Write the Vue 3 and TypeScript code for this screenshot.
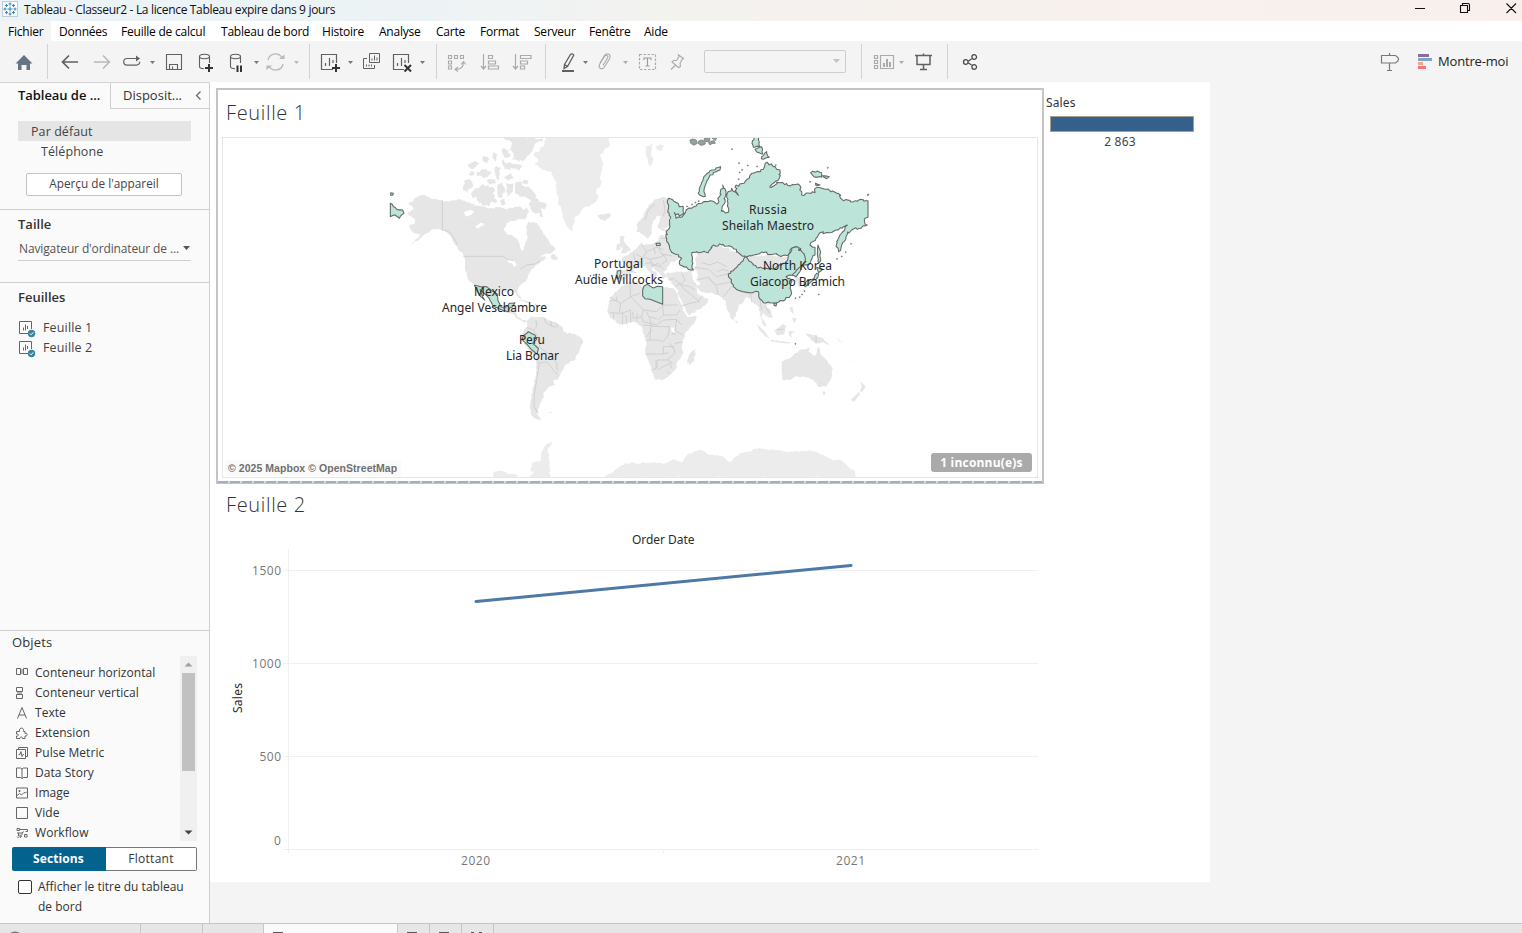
<script setup lang="ts">
interface Stroke { d: string; c?: string; f?: string; w?: number; dash?: string }
interface Tool { x: number; w: number; kind?: 'combo' | 'sep'; p: Stroke[] }
interface Land { p: string; rough?: number; c?: string }

const menus = ['Fichier', 'Données', 'Feuille de calcul', 'Tableau de bord', 'Histoire', 'Analyse', 'Carte', 'Format', 'Serveur', 'Fenêtre', 'Aide']

const DARK = '#606060'
const DIM = '#b8b8b8'
const caret = (x: number, c = '#777'): Stroke => ({ d: `M${x - 2.5} 61h5l-2.5 3z`, f: c, c: 'none' })
const sep = (x: number): Tool => ({ x, w: 1, kind: 'sep', p: [] })

// Icon geometry is expressed in window coordinates; each tool shows its own slice of the bar.
const tools: Tool[] = [
  { x: 0, w: 47, p: [{ d: 'M15.500 63.500 24 55l8.500 8.500H30V70h-3.500v-5h-5v5H18v-6.500z', f: '#667382', c: 'none' }] },
  sep(47),
  { x: 48, w: 40, p: [{ d: 'M62.500 62H78M69 55.500 62.500 62 69 68.500', w: 1.7 }] },
  { x: 88, w: 30, p: [{ d: 'M94 62h15.500M103 55.500l6.500 6.500-6.500 6.500', c: DIM, w: 1.500 }] },
  { x: 118, w: 42, p: [{ d: 'M130 58.500h-3a3.300 3.300 0 0 0 0 6.600h9.500a3.300 3.300 0 0 0 3.300-3.300M129 58.500h8', w: 1.200 }, { d: 'M136 55.500l4 3-4 3z', f: DARK, c: 'none' }, caret(152.5)] },
  { x: 160, w: 26, p: [{ d: 'M166.500 54.500h15v15h-15zM169.500 69v-4.500h8v4.500M172.500 69v-2.500', w: 1.100 }] },
  { x: 186, w: 34, p: [{ d: 'M199.500 56.500c0-3 10-3 10 0s-10 3-10 0v10c0 1.500 2 2.200 4.500 2.200M209.500 56.500V63', w: 1.100 }, { d: 'M205 68h8M209 64v8', c: '#333', w: 2 }] },
  { x: 220, w: 43, p: [{ d: 'M230.500 56.500c0-3 10-3 10 0s-10 3-10 0v10c0 1.500 2 2.200 4.500 2.200M240.500 56.500V63', w: 1.100 }, { d: 'M237.500 65.500v6.500M241 65.500v6.500', c: '#333', w: 2 }, caret(256.5)] },
  { x: 263, w: 46, p: [{ d: 'M268 60a7.500 7.500 0 0 1 14-2M283 64a7.500 7.500 0 0 1-14 2', c: DIM, w: 1.300 }, { d: 'M279 59h5.500V54.500zM272 65.500h-5.500V70z', f: DIM, c: 'none' }, caret(296.5, '#bbb')] },
  sep(309),
  { x: 310, w: 48, p: [{ d: 'M333 69.500h-11.500v-15h15V63M325.500 66v-3M329.500 66v-8M333 63v-3', w: 1.200 }, { d: 'M332 68h8M336 64v8', c: '#333', w: 2 }, caret(350.5)] },
  { x: 358, w: 28, p: [{ d: 'M369.500 53.500h10v9h-10zM367 58.500h-3.500v10h11V65M372 60.500v-2M374.500 60.500v-5M377 60.500v-3M366.500 66.500v-2M369 66.500v-2M371.500 66.500v-2', w: 1 }] },
  { x: 386, w: 50, p: [{ d: 'M404 69.500h-10.500v-15h15V63M397.500 66v-3M401.500 66v-8M405 63v-3', w: 1.200 }, { d: 'M404.500 65l6.500 6.500M411 65l-6.500 6.500', c: '#333', w: 2 }, caret(422.5)] },
  sep(436),
  { x: 437, w: 36, p: [{ d: 'M448.500 55.500h3v3h-3zM454.500 55.500h3v3h-3zM460.500 55.500h3v3h-3zM448.500 61h3v3h-3zM448.500 66h3v3h-3zM463.500 62c0 5-3 7.500-8 7.500M461 64.500l2.500-3 2.500 3M458 67l-3 2.500 3 2', c: '#aaa', w: 1.100 }] },
  { x: 473, w: 34, p: [{ d: 'M483.500 54v15M481 66l2.500 3 2.500-3M488.500 55.500h4v3h-4zM488.500 61h7v3h-7zM488.500 66h10v3h-10z', c: '#aaa', w: 1.200 }] },
  { x: 507, w: 38, p: [{ d: 'M515.500 54v15M513 66l2.500 3 2.500-3M520.500 55.500h10.500v3h-10.500zM520.500 61h7v3h-7zM520.500 66h4v3h-4z', c: '#aaa', w: 1.200 }] },
  sep(545),
  { x: 546, w: 46, p: [{ d: 'M564.500 64.500 570.500 54.500q2-1.500 3.200.8L567.500 66.500l-3.500 2zM564.500 64.500l3 2', w: 1.300 }, { d: 'M562 71h12', w: 2 }, caret(585.5)] },
  { x: 592, w: 40, p: [{ d: 'M603 65.500l4.500-7.500q1-2-.5-2.500t-2.500 1l-5 8q-1 3 1 4t3.500-1l5.500-8.500q1.500-4-1-5t-4 1.500l-4.500 7.500', c: '#aaa', w: 1.100 }, caret(625.5, '#aaa')] },
  { x: 632, w: 30, p: [{ d: 'M639.500 54.500h16v15h-16z', c: '#aaa', w: 1.200, dash: '2.5 1.500' }, { d: 'M644 60v-2h7v2M647.500 58v8M645.500 66h4', c: '#999', w: 1.100 }] },
  { x: 662, w: 42, p: [{ d: 'M678 54.500l5.500 4-1.500 1-2 4 .5 3-2 1-6.500-5.500 1.500-1.500 3 0 2.500-4zM675 65.500l-4 4', c: '#aaa', w: 1.100 }] },
  { x: 704, w: 142, kind: 'combo', p: [] },
  { x: 846, w: 15, p: [] },
  sep(861),
  { x: 862, w: 46, p: [{ d: 'M874.500 55.500h3v3h-3zM874.500 60.500h3v3h-3zM874.500 65.500h3v3h-3zM880.500 55.500h13v13h-13z', c: '#aaa', w: 1.200 }, { d: 'M884 67v-4M887 67v-8M890 67v-5', c: '#aaa', w: 2 }, caret(901.5, '#aaa')] },
  { x: 908, w: 39, p: [{ d: 'M915 55.500h17M917 55.500v9h13v-9M923.500 53.500v2M923.500 64.500v5M920 69.500h7', w: 1.500 }] },
  sep(947),
  { x: 948, w: 420, p: [{ d: 'M968.500 61l3-2M968.500 63l3 2M963.500 62a2.300 2.300 0 1 0 4.600 0a2.300 2.300 0 1 0-4.600 0M971.900 57a2.300 2.300 0 1 0 4.600 0a2.300 2.300 0 1 0-4.600 0M971.900 67a2.300 2.300 0 1 0 4.600 0a2.300 2.300 0 1 0-4.600 0', c: '#4a4a4a', w: 1.300 }] },
  { x: 1368, w: 50, p: [{ d: 'M1381.500 55.500h14l2.500 2 .5 1.500-.5 2-2.500 2h-14zM1389.500 53v2.500M1389.500 63v7.500M1387 70.500h5', c: '#777', w: 1.200 }] },
  { x: 1418, w: 20, p: [
    { d: 'M1418 54h11v3h-11z', f: '#8a6d9c', c: 'none' }, { d: 'M1418 58h14v3h-14z', f: '#7fa3cf', c: 'none' },
    { d: 'M1418 62h5v3h-5z', f: '#f2a77c', c: 'none' }, { d: 'M1418 66h8v3h-8z', f: '#f9707f', c: 'none' }] },
]

const objects: { label: string; d: string; solid?: string }[] = [
  { label: 'Conteneur horizontal', d: 'M.5 1.500h4v6h-4zM7.500 1.500h4v6h-4z', solid: 'M4 2h4v5H4z' },
  { label: 'Conteneur vertical', d: 'M.5.5h6v4h-6zM.5 7.500h6v4h-6z', solid: 'M1 4h5v4H1z' },
  { label: 'Texte', d: 'M1.500 11.500 6 .5l4.500 11M3 8h6' },
  { label: 'Extension', d: 'M.5 4.500h3c-1-3 3-5 4-2 .2 1-.5 2 0 2h1.500v2c3-1 3 3 0 2.500v2.500H6.500c.5-2-3-2-2.500 0H.5V9c2.500.5 2.500-2.500 0-2z' },
  { label: 'Pulse Metric', d: 'M.5 2.500h9v9h-9zM2.500 2V.5h9v9H10M2.500 7.500h1.500l1-3 1 5 1-2h1' },
  { label: 'Data Story', d: 'M.5 1h4L6 2l1.500-1h4v9.500h-4L6 11.500l-1.500-1h-4zM6 2v9' },
  { label: 'Image', d: 'M.5 1h11v10H.5zM1 8.500 3.500 6.500l2 1.500L8 5.500 9.500 6 11 4.500M3 3.500h1v1H3z' },
  { label: 'Vide', d: 'M.5.5h11v11H.5z' },
  { label: 'Workflow', d: 'M1 1.500h2.500v2H1zM3.500 2.500h8v2h-2M1 6h5l2-1.500M2.500 6v3h3M4 7.500 5.500 9 4 11M1 9.500l1.500 1.500M8.500 7.500H11V10H8.500zM6 6v2' },
]

/** Turns a list of vertices into a closed outline, adding small coastal irregularities. */
function coast(points: string, rough = 3): string {
  const n = points.trim().split(/[\s,]+/).map(Number)
  let seed = n.length * 31 + Math.round(n[0] ?? 0) + 7
  const rnd = () => { seed = (seed * 16807 + 11) % 2147483647; return (Math.abs(seed) % 1000) / 1000 - 0.5 }
  const out: string[] = []
  for (let i = 0; i < n.length; i += 2) {
    const x = n[i], y = n[i + 1], nx = n[(i + 2) % n.length], ny = n[(i + 3) % n.length]
    out.push(`${x} ${y}`)
    const steps = Math.floor(Math.hypot(nx - x, ny - y) / 6)
    // Exact meridians (the map's date line, for one) stay straight.
    if (rough > 0 && x !== nx) for (let k = 1; k < steps; k++) {
      const t = k / steps
      out.push(`${(x + (nx - x) * t + rnd() * rough * 2).toFixed(1)} ${(y + (ny - y) * t + rnd() * rough * 2).toFixed(1)}`)
    }
  }
  return 'M' + out.join('L') + 'Z'
}

const lands: Land[] = [
  // North America
  { p: '85 222 100 210 118 197 135 196 150 203 187 211 205 216 235 207 250 212 275 222 300 228 330 235 355 232 380 238 400 235 420 228 432 240 440 232 448 245 440 262 425 268 410 270 395 272 380 280 370 300 380 312 400 320 415 330 420 345 425 362 433 358 435 340 443 325 440 305 438 290 445 275 460 275 475 285 485 300 495 315 505 330 520 348 527 358 515 368 495 372 480 378 498 382 480 400 465 408 452 420 447 432 443 445 430 458 415 475 412 485 422 500 424 508 418 505 408 490 400 483 375 485 350 482 346 500 364 535 330 500 300 480 285 466 270 455 262 440 255 420 255 390 250 375 235 360 222 340 215 325 205 312 190 300 170 298 155 300 140 310 125 322 93 344 115 325 120 312 100 308 92 300 88 285 105 280 105 268 88 258 82 248 100 240 95 228' },
  { p: '518 372 535 385 520 389 512 384' },
  { p: '405 165 425 155 440 170 460 185 470 205 500 222 495 240 482 235 490 262 470 250 455 240 445 225 452 210 425 200 405 190', rough: 6 },
  { p: '370 22 488 22 462 50 440 85 430 93 395 88 400 72 385 60 395 45', rough: 7 },
  { p: '285 175 310 162 340 172 345 195 352 215 330 225 300 222 290 210 275 195', rough: 6 },
  { p: '252 150 272 150 280 165 262 188 250 182', rough: 4 },
  { p: '290 125 320 118 335 130 318 142 290 138', rough: 4 }, { p: '320 150 345 146 348 160 330 164', rough: 3 },
  { p: '262 105 285 92 300 100 275 118' }, { p: '310 78 325 82 322 100 308 92' },
  { p: '340 62 352 75 345 95 338 85' }, { p: '365 90 382 100 428 105 420 118 375 118', rough: 5 },
  { p: '372 142 392 128 402 145 385 152' }, { p: '352 165 368 158 375 180 365 205 352 190', rough: 4 },
  { p: '378 160 400 160 398 185 382 200' }, { p: '400 245 418 235 428 255 410 262' }, { p: '348 108 360 112 356 150 345 135' },
  { p: '366 50 382 60 392 78 376 84 368 70', rough: 4 }, { p: '272 122 284 126 276 138 266 134' }, { p: '430 150 446 152 440 164 426 160', rough: 2 },
  { p: '360 212 374 206 378 222 364 226', rough: 2 }, { p: '222 322 232 340 228 344 216 330', rough: 1 },
  // Greenland and the north Atlantic
  { p: '500 22 490 50 460 75 475 90 465 105 495 120 515 125 525 150 530 180 535 215 545 245 548 265 560 290 572 303 580 285 582 265 600 250 610 235 640 220 655 205 648 185 662 165 660 140 668 120 665 90 660 75 690 45 685 30 690 22', c: 'pale', rough: 4 },
  { p: '653 255 665 252 690 250 693 258 675 273 660 268' },
  { p: '722 318 735 320 732 335 745 350 752 362 738 370 722 372 728 355 720 340', rough: 2 },
  { p: '710 342 722 340 722 358 708 360', rough: 2 },
  { p: '795 50 820 45 812 75 820 90 808 108 798 75', c: 'pale', rough: 5 }, { p: '825 45 855 42 848 58 830 58', c: 'pale', rough: 5 },
  // Central and South America
  { p: '370 535 405 540 412 560 428 570 440 572 436 578 415 568 398 552 370 545', rough: 1 },
  { p: '412 508 440 512 458 522 440 518', rough: 1 }, { p: '462 522 480 526 470 532', rough: 1 },
  { p: '440 575 455 558 462 562 490 562 512 572 530 580 543 588 550 605 575 612 600 620 609 632 600 655 590 675 582 692 560 702 548 720 535 748 520 750 525 765 505 770 500 780 490 790 492 802 480 820 475 835 470 852 484 868 465 866 452 850 450 825 455 800 460 770 466 740 470 705 468 680 445 660 432 635 425 620 432 600 443 592' },
  { p: '506 846 516 846 512 850', rough: 0 },
  // Europe
  { p: '770 305 772 280 790 260 805 230 825 208 850 200 872 208 870 250 868 285 845 300 832 290 842 258 830 258 815 285 815 305 805 328 792 316 786 312' },
  { p: '708 418 738 420 738 402 725 388 745 375 760 362 772 352 785 335 792 346 815 342 835 330 842 315 862 320 880 365 900 385 870 400 860 420 850 425 862 440 850 448 840 432 822 415 812 408 830 432 822 445 808 425 795 408 780 412 762 418 752 430 740 445 718 452 706 446' },
  // Middle East, India, South-East Asia
  { p: '860 428 890 424 915 425 945 412 950 370 1000 340 1090 375 1230 380 1290 350 1250 430 1268 462 1258 472 1245 450 1225 440 1230 470 1225 500 1190 515 1155 525 1172 542 1178 565 1165 563 1150 548 1145 562 1158 590 1150 586 1142 560 1138 535 1120 520 1112 505 1100 500 1075 530 1062 570 1055 568 1040 530 1035 510 1020 500 1000 490 965 487 945 470 955 492 985 510 965 535 925 555 905 515 885 470 862 446' },
  // Africa
  { p: '690 502 720 472 745 457 780 452 785 470 810 478 845 470 880 475 890 488 900 515 912 545 922 562 950 558 945 575 915 610 905 650 910 670 890 700 890 715 865 740 850 749 825 749 815 720 805 690 795 660 800 640 790 610 785 590 760 575 720 584 690 560 682 545', rough: 2 },
  { p: '930 670 948 658 940 695 930 708 922 698' },
  // Oceania
  { p: '1205 695 1230 685 1245 670 1265 658 1290 655 1285 665 1305 678 1315 650 1325 675 1340 690 1358 715 1355 742 1340 768 1315 770 1300 750 1280 742 1250 738 1230 750 1208 750 1205 720', rough: 2 },
  { p: '1325 784 1338 786 1332 797', rough: 1 }, { p: '1441 755 1458 770 1445 787 1440 782 1446 770', rough: 1 }, { p: '1413 810 1438 785 1440 792 1422 815', rough: 1 },
  { p: '1130 583 1150 600 1170 625 1160 622 1140 602', rough: 1 }, { p: '1172 629 1230 637 1228 641 1172 634', rough: 1 }, { p: '1182 602 1210 582 1218 588 1210 615 1190 615', rough: 2 },
  { p: '1225 605 1245 602 1232 612 1240 625 1228 618', rough: 1 }, { p: '1275 610 1305 615 1330 625 1348 645 1325 637 1308 640 1290 625', rough: 2 },
  { p: '1230 530 1238 532 1242 552 1232 545', rough: 1 }, { p: '1235 565 1250 565 1245 580', rough: 1 }, { p: '1066 570 1074 575 1068 580', rough: 1 },
  { p: '1365 620 1372 626 1390 640 1378 634', rough: 0 }, { p: '1404 686 1414 692 1410 692', rough: 0 },
  // Antarctica
  { p: '670 1042 700 1025 725 1005 750 1000 810 998 850 1002 880 988 905 998 915 980 960 958 980 970 1030 980 1048 996 1080 970 1135 955 1180 960 1230 965 1290 960 1330 975 1350 985 1390 995 1425 1025 1428 1042', c: 'pale' },
  { p: '450 1042 462 1028 450 1024 455 1000 480 995 485 965 500 942 520 935 505 955 508 990 510 1042', c: 'pale' }, { p: '340 1028 365 1023 385 1032 410 1035 425 1042 340 1042', c: 'pale' },
]

const waters = [
  '860 412 875 400 895 398 920 412 912 424 885 420 866 424', '935 425 948 418 955 435 950 448 962 462 950 466 938 448',
  '1222 436 1235 430 1244 438 1246 452 1234 452', '252 247 270 240 282 246 262 260', '285 290 302 278 314 282 295 296',
  '385 388 402 392 410 405 402 412 396 400 384 396', '872 592 886 592 884 608 874 605',
]

const borders = [
  'M187 211V300L205 304 220 322 232 342M250 379H370L385 388 400 392M420 418 440 405 465 402 480 392',
  'M440 592 460 600 470 590 468 570M490 562 500 580 525 592M460 600 480 628 478 650 500 668 515 675 530 700 532 722M470 690 480 700 500 695 520 720M478 700 470 750 462 800 462 830 475 850M512 572 515 588M530 580 532 592M520 722 535 735',
  'M690 502 722 520 752 500 780 490M752 500 750 457M722 520 718 550 690 548M752 540 720 552M752 500 790 540 830 545 850 525 892 525M848 525 850 555 835 570M790 540 785 560 760 565 758 545M785 560 790 575 830 585 850 570 890 568 905 585M850 555 890 555 900 540M790 585 840 590 868 590 865 615 850 635 835 630 800 630M795 672H850V650L880 650 885 670 860 690 832 690 830 715M850 672 865 668M832 720 850 710 870 700 875 715M868 640 880 655M890 568 885 600 908 615M885 640 908 636M808 560 815 590M800 620 815 600M770 575 772 550M740 580 738 555M862 724 868 732M690 512H710V500M728 545 728 584M752 540 752 576M800 545 806 560 830 566M812 590 810 630M815 720 828 716 828 690M862 690 878 700M875 610 888 612M700 552 702 568',
  'M785 345 800 365 830 352 850 360M800 365 790 380 810 388 838 382 860 372M838 345 840 365 862 390 845 402M768 372 790 385M810 388 820 405 842 410M742 420 768 428M760 370 765 390 788 400M815 408 835 400 850 418M885 450 905 465 930 470 945 480M905 428 915 450 900 465M885 470 900 462 915 480 960 515M945 412 985 418 1010 440 1050 430M985 440 1005 465 1045 458 1065 440M950 450 985 442 1010 470 1015 495M1030 500 1055 470 1068 460M1060 470 1082 485 1112 492M1112 492 1115 515M1138 500 1145 540M1155 525 1168 550M795 270 805 240 825 222M850 210 855 240 850 260M845 300 860 300 860 325 842 325M930 520 955 515 965 500M965 398 990 405 1012 396 1040 410M1010 425 1030 418 1046 424M868 448 884 446M822 352 826 372M846 372 876 378M796 400 812 398 818 412M904 528 930 520',
  'M1308 615V640M1190 598 1210 598',
]

// Highlighted countries, Russia first.
const regions: string[] = [
  coast('863 210 875 208 895 222 910 235 912 250 898 258 883 248 888 265 905 262 918 240 935 235 965 220 990 212 1012 222 1018 200 1028 165 1038 185 1032 222 1024 244 1046 246 1044 220 1040 195 1055 175 1075 196 1065 172 1095 155 1115 130 1150 118 1162 97 1180 110 1200 120 1198 145 1170 172 1200 158 1230 168 1258 165 1265 195 1305 188 1310 172 1340 178 1375 190 1390 212 1420 215 1440 208 1464 212 1464 262 1453 268 1462 285 1440 295 1415 300 1398 320 1385 345 1376 365 1370 335 1380 315 1402 285 1390 290 1375 300 1350 308 1320 308 1290 345 1305 352 1305 375 1290 400 1272 405 1260 395 1272 372 1250 350 1235 355 1225 375 1205 378 1150 368 1095 378 1080 372 1055 350 1025 345 1000 345 985 368 950 365 935 375 940 420 915 412 898 400 905 385 880 370 860 335 858 305 870 290 868 250', 4.2),
  coast('1045 432 1060 422 1080 402 1095 380 1112 395 1130 412 1180 418 1220 395 1225 378 1235 355 1250 350 1272 372 1275 395 1250 430 1230 435 1218 440 1235 450 1230 475 1235 490 1215 510 1190 518 1170 518 1150 518 1138 505 1135 485 1110 488 1080 482 1060 470 1050 445', 2.8),
  coast('788 480 792 468 802 463 820 474 832 469 848 470 848 523 810 508 795 506 788 498', 0),
  coast('955 190 960 170 972 140 990 122 1022 110 1020 120 990 135 978 160 972 180 976 199 960 196', 2.8),
  coast('1116 40 1122 22 1136 22 1139 50 1120 52', 2.5), coast('1125 58 1145 50 1148 72 1130 66', 2.5), coast('1144 86 1160 65 1168 82 1150 88', 2.5),
  coast('1292 128 1312 123 1325 128 1325 142 1302 140', 2.5), coast('1326 137 1348 140 1340 146', 1), coast('1306 160 1320 165 1308 166', 1),
  coast('31 220 50 238 68 240 72 250 58 265 45 255 31 260', 2), coast('32 188 40 190 38 196 32 196', 0),
  coast('283 466 300 470 320 470 335 482 352 492 354 512 364 532 380 530 388 520 405 518 398 530 388 535 384 545 370 542 340 528 325 502 300 478 308 500 314 510 302 500 292 484', 0.8),
  coast('445 605 465 615 470 628 458 640 475 655 472 673 455 660 440 642 426 628 430 618', 0.8),
  coast('712 424 722 421 722 430 716 446 710 444', 0.5), coast('1314 345 1320 360 1322 392 1316 400 1312 370', 1.5),
  coast('1272 462 1285 450 1302 445 1310 430 1316 432 1308 448 1290 458 1275 470', 2), coast('1310 412 1328 418 1316 428', 1),
  coast('1237 435 1258 412 1268 405 1260 425 1248 440', 1), coast('1182 520 1190 520 1188 528 1182 526', 0.5),
  coast('828 340 840 339 841 346 830 347', 0.8),
]
const clusters = [
  coast('930 30 945 28 952 40 942 46 932 40', 4), coast('955 34 968 30 976 42 962 46', 4),
  coast('972 26 990 24 988 34 974 34', 4), coast('985 38 1002 32 1006 40 990 45', 3), coast('996 24 1010 24 1006 32', 3),
]
const islets = '1055 56 1076 98 1102 105 1078 126 1075 146 1085 118 1130 108 1186 104 1342 112 1289 154 1464 192 1462 194 920 228 935 222 945 216 955 212 1412 340 1396 365 1384 378 1370 385 1272 482 1265 492 1258 500 1245 503 1315 492 1245 640 630 436 640 434 655 440 648 432'
  .split(' ').map(Number)
const isletPath = islets.reduce((s, v, i) => i % 2 ? s + `${v}l3 .5-1 2.500-2 0z` : s + `M${v} `, '')

const labels = [
  { t: 'Russia', x: 749, y: 214, w: 38 }, { t: 'Sheilah Maestro', x: 722, y: 230, w: 92 },
  { t: 'Portugal', x: 594, y: 268, w: 49 }, { t: 'Audie Willcocks', x: 575, y: 284, w: 88 },
  { t: 'North Korea', x: 763, y: 270, w: 69 }, { t: 'Giacopo Bramich', x: 750, y: 286, w: 95 },
  { t: 'Mexico', x: 474, y: 296, w: 40 }, { t: 'Angel Veschambre', x: 442, y: 312, w: 105 },
  { t: 'Peru', x: 519, y: 344, w: 26 }, { t: 'Lia Bonar', x: 506, y: 360, w: 53 },
]
const ticks = [{ t: '1500', y: 570.5, x: 252, w: 29, b: 575 }, { t: '1000', y: 663.5, x: 252, w: 29, b: 668 }, { t: '500', y: 756.5, x: 259.5, w: 21.5, b: 761 }, { t: '0', y: 849.5, x: 274, w: 7, b: 845 }]
</script>

<template>
  <div class="app">
    <header class="titlebar">
      <svg class="logo" width="17" height="17" viewBox="0 0 17 17">
        <rect x=".5" y=".5" width="15" height="15" fill="#f8fbfd" stroke="#c2ccd2" />
        <path d="M8 5.500v5M5.500 8h5M8 1.500v3M6.500 3h3M8 11.500v3M6.500 13h3M1.500 8h3M3 6.500v3M11.500 8h3M13 6.500v3M4.500 3v3M3 4.500h3M11.500 3v3M10 4.500h3M4.500 10v3M3 11.500h3M11.500 10v3M10 11.500h3" stroke="#3d87b5" fill="none" />
      </svg>
      <span class="title">Tableau - Classeur2 - La licence Tableau expire dans 9 jours</span>
      <svg class="winbtns" width="107" height="21" viewBox="1415 0 107 21">
        <path d="M1415 8.500h10M1460.500 5.500h7v7h-7zM1462.500 5v-1.500h5.500q1.500 0 1.500 1.500v5.500h-1.500M1506.500 3.500l9.500 9.500M1516 3.500l-9.500 9.500" fill="none" stroke="#111" stroke-width="1.1" />
      </svg>
    </header>
    <nav class="menu"><span v-for="m in menus" :key="m">{{ m }}</span></nav>

    <div class="toolbar">
      <template v-for="(t, i) in tools" :key="i">
        <i v-if="t.kind === 'sep'" class="sep" />
        <div v-else-if="t.kind === 'combo'" class="combo"><svg width="8" height="5"><path d="M0 0h7L3.500 4z" fill="#c4c4c4" /></svg></div>
        <svg v-else :width="t.w" height="41" :viewBox="`${t.x} 41 ${t.w} 41`">
          <path v-for="(p, k) in t.p" :key="k" :d="p.d" :fill="p.f ?? 'none'" :stroke="p.c ?? DARK" :stroke-width="p.w ?? 1" :stroke-dasharray="p.dash" />
        </svg>
      </template>
      <span class="showme">Montre-moi</span>
    </div>

    <main class="body">
      <aside class="side">
        <div class="tabs">
          <b>Tableau de ...</b>
          <span class="tab2"><em>Disposit...</em><svg width="7" height="10"><path d="M5.500.5 1.500 4.500l4 4" fill="none" stroke="#666" stroke-width="1.2" /></svg></span>
        </div>
        <section class="devices">
          <div class="dev on">Par défaut</div>
          <div class="dev sub">Téléphone</div>
          <div class="preview">Aperçu de l'appareil</div>
        </section>
        <section class="size">
          <h3>Taille</h3>
          <div class="select"><span>Navigateur d'ordinateur de ...</span><svg width="8" height="5"><path d="M0 0h7L3.500 4z" fill="#555" /></svg></div>
        </section>
        <section class="sheets">
          <h3>Feuilles</h3>
          <div v-for="n in 2" :key="n" class="sheet">
            <svg width="17" height="17"><path d="M9.500 12.500H.5V.5h12V8M4.500 9.500v-3M6.500 9.500v-6M8.500 8v-3" fill="none" stroke="#666" /><circle cx="12.500" cy="12.500" r="3.700" fill="#3a84a6" /><path d="M10.800 12.500l1.300 1.300 2.200-2.400" stroke="#fff" fill="none" /></svg>
            <span>Feuille {{ n }}</span>
          </div>
        </section>
        <section class="objects">
          <h3>Objets</h3>
          <div class="listbox">
            <ul>
              <li v-for="o in objects" :key="o.label">
                <svg width="12" height="12"><path v-if="o.solid" :d="o.solid" fill="#b4b4b4" /><path :d="o.d" fill="none" stroke="#666" stroke-width="1" /></svg>{{ o.label }}
              </li>
            </ul>
            <div class="scroll">
              <svg width="17" height="17"><path d="M4.500 10.500h8l-4-4z" fill="#a0a0a0" /></svg>
              <i />
              <svg width="17" height="17"><path d="M4.500 6.500h8l-4 4z" fill="#444" /></svg>
            </div>
          </div>
          <div class="toggle"><b>Sections</b><span>Flottant</span></div>
          <div class="check"><i /><p>Afficher le titre du tableau<br>de bord</p></div>
        </section>
      </aside>

      <div class="canvas">
        <div class="dash">
          <div class="left">
            <section class="frame">
              <h2>Feuille 1</h2>
              <div class="mapbox">
                <svg class="map" width="814" height="339" viewBox="223 138 814 339">
                  <g transform="translate(380 130) scale(.33333)">
                    <path v-for="(l, i) in lands" :key="i" :d="coast(l.p, l.rough ?? 3)" :class="['land', l.c]" />
                    <path v-for="(w, i) in waters" :key="i" :d="coast(w, 2)" class="water" />
                    <path v-for="(b, i) in borders" :key="i" :d="b" class="border" />
                    <path v-for="(r, i) in regions" :key="i" :d="r" class="region" />
                    <path v-for="(c, i) in clusters" :key="i" :d="c" class="islet" />
                    <path :d="isletPath" class="islet" />
                  </g>
                  <text v-for="l in labels" :key="l.t" :x="l.x" :y="l.y" :textLength="l.w" class="lbl">{{ l.t }}</text>
                </svg>
                <span class="attr">© 2025 Mapbox © OpenStreetMap</span>
                <span class="unknown">1 inconnu(e)s</span>
              </div>
              <div class="grip" />
            </section>
            <section class="chart">
              <h2>Feuille 2</h2>
              <svg width="828" height="350" viewBox="216 530 828 350">
                <g stroke="#f0f0f0" fill="none">
                  <path v-for="t in ticks" :key="t.t" :d="`M283 ${t.y}H1038`" />
                  <path d="M288.500 549V853M663.500 850v3" />
                </g>
                <path d="M476 601.500 851 565.500" stroke="#4e79a7" stroke-width="3" stroke-linecap="round" />
                <text x="632" y="544" textLength="62.500" class="head">Order Date</text>
                <text v-for="t in ticks" :key="t.t" :x="t.x" :y="t.b" :textLength="t.w" class="tick">{{ t.t }}</text>
                <text x="461" y="865" textLength="29" class="tick">2020</text>
                <text x="836" y="865" textLength="29" class="tick">2021</text>
                <text transform="translate(242 713) rotate(-90)" textLength="30" class="head">Sales</text>
              </svg>
            </section>
          </div>
          <aside class="legend"><span>Sales</span><i /><em>2 863</em></aside>
        </div>
      </div>
    </main>

    <footer class="sheetbar">
      <span class="w141"><svg width="12" height="2"><path d="M1 2Q6-1 11 2z" fill="#777" /></svg></span><span class="w62" /><span class="w61" />
      <span class="w134 active"><i /></span><span class="w32"><i /></span><span class="w32"><i /></span><span class="w32"><i class="short" /><i class="short" /></span>
    </footer>
  </div>
</template>

<style>
html, body { margin: 0; overflow: hidden; }
</style>

<style scoped>
* { box-sizing: border-box; }
.app { width: 1522px; height: 933px; display: flex; flex-direction: column; overflow: hidden; background: #f4f4f4; font: 12.5px/20px "Open Sans", sans-serif; color: #333; }
svg { display: block; flex: none; }
h2, h3, p, ul { margin: 0; padding: 0; font-weight: normal; list-style: none; }
em { font-style: normal; }
span, b, li, em { white-space: nowrap; }

.titlebar { height: 21px; flex: none; display: flex; align-items: center; padding-left: 2px; background: linear-gradient(90deg, #ecf3f7 0, #edf3f5 28%, #f3f2ef 45%, #f7f1ed 65%, #f9f0ee); }
.logo { margin-top: -2px; }
.title { margin: -2px 0 0 5px; font: 12px/20px "Open Sans", sans-serif; color: #111; letter-spacing: -.33px; }
.winbtns { margin-left: auto; }
.menu { height: 20px; flex: none; display: grid; background: #fff; color: #000; font: 12px/21px "Open Sans", sans-serif; letter-spacing: -.22px; grid-template-columns: 51px 62px 100px 101px 57px 57px 44px 54px 55px 55px 60px; }
.menu span { padding-left: 8px; }
.menu span:first-child { background: #f4f4f4; }

.toolbar { height: 41px; flex: none; display: flex; align-items: center; background: #f4f4f4; }
.sep { width: 1px; height: 35px; background: #d2d2d2; flex: none; }
.combo { width: 142px; height: 23px; border: 1px solid #cecece; border-radius: 2px; display: flex; align-items: center; justify-content: flex-end; padding-right: 4px; flex: none; }
.showme { font-size: 13px; color: #222; letter-spacing: -.18px; margin-top: -2px; }

.body { height: 841px; flex: none; display: flex; }
.side { width: 210px; flex: none; background: #fafafa; border-right: 1px solid #cecece; border-top: 1px solid #d4d4d4; display: flex; flex-direction: column; }
.tabs { height: 26px; display: flex; line-height: 25px; color: #111; }
.tabs b { width: 110px; padding-left: 18px; font-size: 13px; font-weight: 600; letter-spacing: -.05px; }
.tab2 { flex: 1; display: flex; align-items: center; justify-content: space-between; border-left: 1px solid #cecece; border-bottom: 1px solid #cecece; padding: 0 7px 0 12px; color: #333; font-size: 13px; line-height: 23px; }
.devices { height: 101px; padding: 12px 18px 0; border-bottom: 1px solid #cecece; color: #444; }
.dev { height: 20px; line-height: 21px; letter-spacing: .08px; }
.dev.on { background: #e5e5e5; padding-left: 13px; }
.dev.sub { padding-left: 23px; }
.preview { height: 23px; margin: 12px 9px 0 8px; border: 1px solid #c4c4c4; border-radius: 2px; background: #fff; text-align: center; line-height: 19px; font-size: 11.8px; }
.size { height: 73px; padding: 4px 18px 0; border-bottom: 1px solid #cecece; }
h3 { font-weight: 600; font-size: 13px; line-height: 20px; }
.select { height: 27px; border-bottom: 1px solid #cecece; display: flex; align-items: center; justify-content: space-between; padding: 2px 0 0 1px; font-size: 12px; letter-spacing: -.13px; color: #555; line-height: 25px; }
.sheets { height: 347px; padding: 4px 18px 0; }
.sheets h3 { margin-bottom: 11px; }
.sheet { height: 20px; display: flex; align-items: center; padding-left: 1px; letter-spacing: .15px; color: #444; }
.sheet svg { margin-top: 3px; }
.sheet span { margin-left: 7px; }
.objects { flex: 1; border-top: 1px solid #cecece; padding: 1px 12px 0; }
.objects h3 { font-weight: 500; letter-spacing: .15px; }
.listbox { height: 185px; margin-top: 4px; display: flex; justify-content: space-between; overflow: hidden; }
.listbox ul { padding: 7px 0 0 4px; }
.listbox li { height: 20px; display: flex; align-items: center; gap: 7px; font-size: 12px; line-height: 20px; letter-spacing: .05px; }
.scroll { width: 17px; background: #f0f0f0; display: flex; flex-direction: column; }
.scroll i { width: 13px; height: 98px; margin: 0 2px 53px; background: #c1c1c1; }
.toggle { height: 24px; margin-top: 6px; display: flex; line-height: 23px; text-align: center; font-size: 12px; }
.toggle b { width: 94px; background: #04628e; color: #fff; font-weight: 700; border-radius: 2px 0 0 2px; letter-spacing: .1px; padding-right: 1px; }
.toggle span { flex: 1; border: 1px solid #777; border-left: 0; border-radius: 0 2px 2px 0; line-height: 21px; letter-spacing: .3px; background: #fff; }
.check { display: flex; margin-top: 6px; padding-left: 6px; }
.check i { width: 14px; height: 14px; border: 1px solid #333; border-radius: 2px; background: #fff; margin-top: 3px; }
.check p { margin-left: 6px; font-size: 12px; white-space: nowrap; }

.canvas { flex: 1; }
.dash { width: 1000px; height: 800px; background: #fff; display: flex; padding: 6px 0 0 6px; }
.left { width: 828px; flex: none; }
h2 { font: 300 20px/28px "Open Sans", sans-serif; color: #333; letter-spacing: .65px; }
.frame { height: 396px; border: 2px solid #c4c4c4; position: relative; }
.frame h2 { height: 47px; padding: 9px 0 0 8px; }
.mapbox { margin-left: 4px; width: 816px; height: 341px; border: 1px solid #e6e6e6; position: relative; overflow: hidden; }
.attr { position: absolute; left: 2px; bottom: 1px; padding: 0 4px 0 3px; font: bold 10.5px/16px "Liberation Sans", sans-serif; color: #707070; background: #fafafa; letter-spacing: .05px; }
.unknown { position: absolute; right: 5px; bottom: 5px; width: 101px; height: 19px; border-radius: 3px; background: #aaa; color: #fff; font: bold 12px/19px "Open Sans", sans-serif; letter-spacing: .2px; text-align: center; }
.grip { position: absolute; left: 0; right: 0; bottom: -1px; height: 2px; background: repeating-linear-gradient(90deg, #a3adc2 0 10px, #d8d8d8 10px 12px); }
.land { fill: #e6e6e6; }
.land.pale { fill: #ececec; }
.water { fill: #fff; }
.border { fill: none; stroke: #cbcbcb; stroke-width: 2.5; }
.region { fill: #bde4d9; stroke: #626967; stroke-width: 3.2; stroke-linejoin: round; }
.islet { fill: #8fa39e; stroke: #707070; stroke-width: 2; }
.lbl { font: 12px "Noto Sans", sans-serif; fill: #262626; }
.chart h2 { height: 46px; padding: 7px 0 0 10px; }
.head { font: 450 12px "Noto Sans", sans-serif; fill: #2b2b2b; }
.tick { font: 12px "Open Sans", sans-serif; fill: #777; }
.legend { padding: 5px 0 0 2px; width: 160px; display: flex; flex-direction: column; font-family: "Noto Sans", sans-serif; font-size: 12px; letter-spacing: .15px; }
.legend i { width: 144px; height: 16px; margin: 3px 0 0 4px; background: #35608b; border: 1px solid #a6a08f; }
.legend em { width: 144px; text-align: center; color: #444; line-height: 19px; margin-left: 2px; }

.sheetbar { height: 10px; flex: none; display: flex; background: #e6e6e6; border-top: 1px solid #c6c6c6; }
.sheetbar span { border-right: 1px solid #c6c6c6; display: flex; align-items: flex-end; padding-left: 9px; }
.sheetbar i { width: 10px; height: 1px; background: #555; }
.sheetbar .short { width: 3px; margin-right: 5px; }
.w141 { width: 141px; } .w62 { width: 62px; } .w61 { width: 61px; } .w134 { width: 134px; } .w32 { width: 32px; }
.active { background: #fafafa; }
</style>
